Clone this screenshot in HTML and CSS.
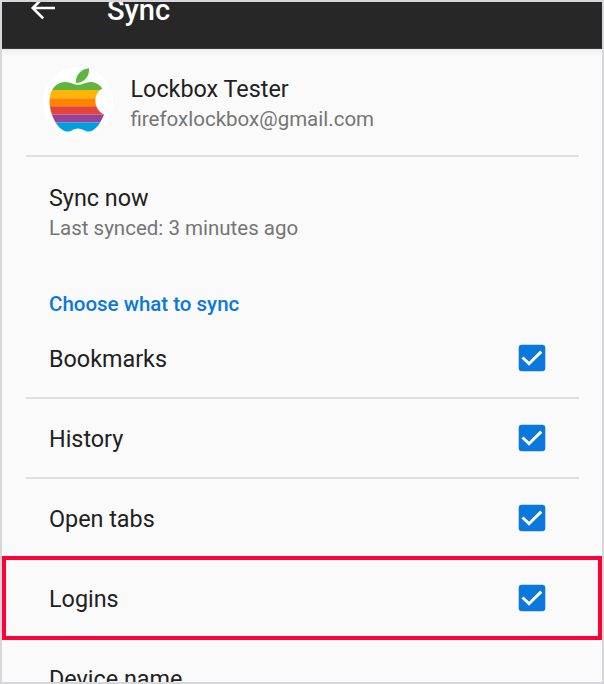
FILE: index.html
```html
<!DOCTYPE html>
<html lang="en">
<head>
<meta charset="utf-8">
<title>Sync</title>
<link rel="stylesheet" href="styles.css">
</head>
<body>
<svg class="defs" aria-hidden="true">
  <symbol id="check" viewBox="0 0 28 28">
    <rect x="0.7" y="0.7" width="26.6" height="26.6" rx="3" fill="#0a78dc"/>
    <path d="M4.5 13.5 L11 19.7 L23.3 7.6" fill="none" stroke="#fff" stroke-width="2.9"/>
  </symbol>
</svg>
<div class="screen">
  <header class="bar">
    <svg class="back" viewBox="0 0 26 24" width="26" height="24"><path d="M25 12H3M13.2 1.6L2.8 12L13.2 22.4" fill="none" stroke="#fff" stroke-width="2.7"/></svg>
    <h1 class="title">Sync</h1>
  </header>
  <main>
    <section class="account">
      <svg class="avatar" viewBox="0 0 70 70" width="70" height="70">
        <defs>
          <clipPath id="apple"><path d="M46 1.2C46.8 9 41 16 33 16C32 8.4 38.4 1.6 46 1.2ZM35.5 18C39.5 18 42.2 15 47.7 15C52 15 56.7 17.5 59.2 21.4C54.8 24 52.2 28.5 52.4 34.3C52.6 40.4 55.9 45.2 61 47.4C58.6 53.8 53.7 62.4 47.5 64.3C42.6 65.4 39.8 61.4 35 61.4C30.2 61.4 27.5 65.4 22.8 64.4C14.5 62.3 6.5 47.4 6.5 34C6.5 21.8 13.6 15 22.7 15C27.6 15 31.3 18 35.5 18Z"/></clipPath>
        </defs>
        <circle cx="35" cy="35" r="35" fill="#fff"/>
        <g clip-path="url(#apple)">
          <path fill="#5eb640" d="M0 0H70V23H0z"/>
          <path fill="#ffb508" d="M0 23H70V31.2H0z"/>
          <path fill="#ff8400" d="M0 31.2H70V39.3H0z"/>
          <path fill="#e54438" d="M0 39.3H70V47.5H0z"/>
          <path fill="#964298" d="M0 47.5H70V55.5H0z"/>
          <path fill="#00a0df" d="M0 55.5H70V70H0z"/>
        </g>
      </svg>
      <div><div class="label">Lockbox Tester</div><div class="sub">firefoxlockbox@gmail.com</div></div>
    </section>
    <section class="sync-now"><div class="label">Sync now</div><div class="sub">Last synced: 3 minutes ago</div></section>
    <h2 class="heading">Choose what to sync</h2>
    <div class="row divided"><span class="label">Bookmarks</span><svg class="box"><use href="#check"/></svg></div>
    <div class="row divided"><span class="label">History</span><svg class="box"><use href="#check"/></svg></div>
    <div class="row"><span class="label">Open tabs</span><svg class="box"><use href="#check"/></svg></div>
    <div class="row marked"><span class="label">Logins</span><svg class="box"><use href="#check"/></svg></div>
    <div class="row"><span class="label">Device name</span></div>
  </main>
</div>
</body>
</html>
```
FILE: styles.css
```css
*, *::after { box-sizing: border-box; }
html, body { margin: 0; height: 684px; overflow: hidden; }
body { font-family: Roboto, sans-serif; color: #212121; }
.defs { display: none; }
.screen { width: 604px; height: 684px; border: 2px solid #d7d7db; background: #fafafa; overflow: hidden; }
.bar { display: flex; height: 47px; padding-left: 28px; background: #272727; border-bottom: 1px solid #3c3838; }
.back { flex: none; margin-top: -6px; }
.title { margin: -8px 0 0 51px; font-size: 29px; line-height: 32px; font-weight: 500; color: #fff; }
main { background: linear-gradient(#ededed, #fafafa 7px); }
.account { display: flex; gap: 17.5px; height: 108px; margin: 0 23px 0 24px; padding: 18px 0 0 17px; border-bottom: 2px solid #e0e0e0; }
.account > div { padding-top: 7px; }
.avatar { flex: none; }
.label { font-size: 23.35px; line-height: 30px; white-space: nowrap; }
.sub { font-size: 20.5px; line-height: 30px; color: #757575; white-space: nowrap; }
.sync-now { height: 132px; padding: 26px 0 0 47px; }
.heading { margin: 0; padding-left: 47px; height: 30px; font-size: 20.5px; line-height: 30px; font-weight: 500; color: #0a78dc; }
.row { position: relative; display: flex; justify-content: space-between; align-items: flex-start; height: 80px; margin: 0 23px 0 24px; padding: 25px 33px 0 23px; }
.divided { border-bottom: 2px solid #e0e0e0; }
.box { flex: none; width: 28px; height: 28px; }
.marked::after { content: ""; position: absolute; left: -24px; right: -23px; top: -3px; height: 84px; border: 4px solid #ff0039; }
```
